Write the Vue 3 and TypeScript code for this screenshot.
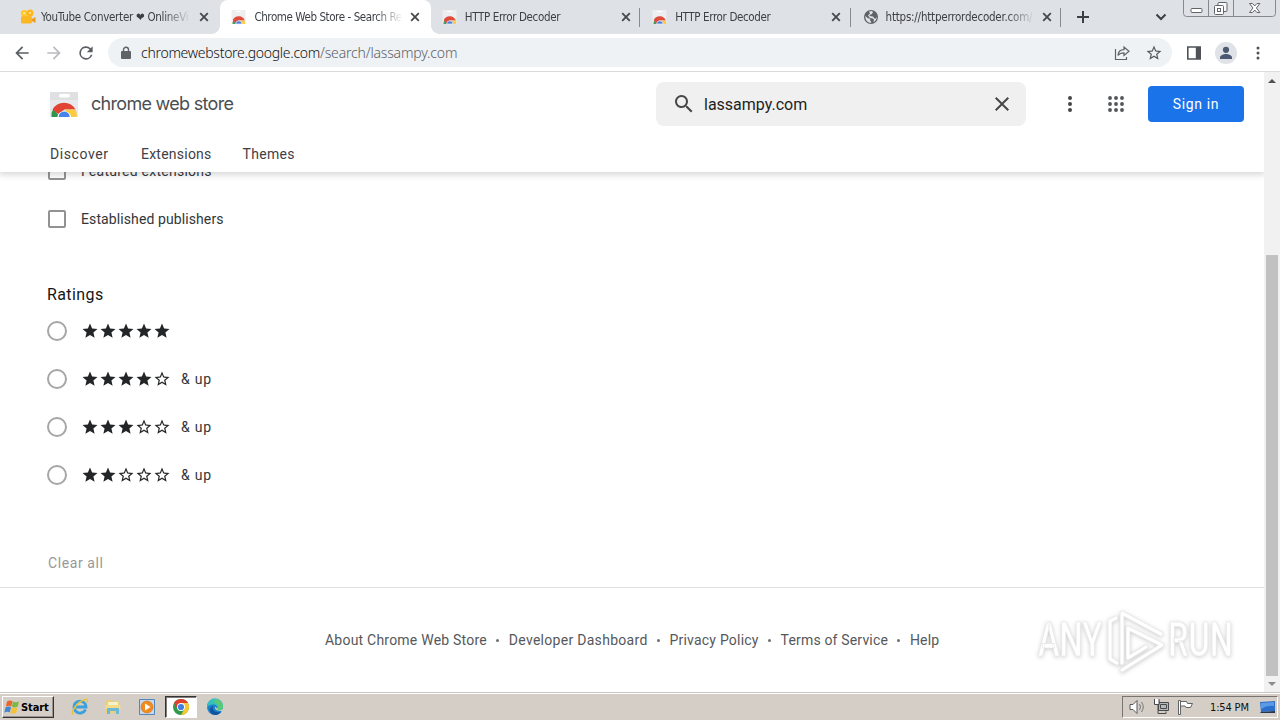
<script setup lang="ts">
interface Tab {
  title: string
  icon: 'camera' | 'store' | 'globe'
  active?: boolean
  kind: string
}

const tabs: Tab[] = [
  { title: 'YouTube Converter ❤ OnlineVi', icon: 'camera', kind: 'tab-video' },
  { title: 'Chrome Web Store - Search Re', icon: 'store', active: true, kind: 'tab-results' },
  { title: 'HTTP Error Decoder', icon: 'store', kind: 'tab-decoder' },
  { title: 'HTTP Error Decoder', icon: 'store', kind: 'tab-decoder' },
  { title: 'https://httperrordecoder.com/', icon: 'globe', kind: 'tab-address' },
]

const ratings: number[] = [5, 4, 3, 2]
const links = [
  { label: 'About Chrome Web Store', cls: 'l1' },
  { label: 'Developer Dashboard', cls: 'l2' },
  { label: 'Privacy Policy', cls: 'l3' },
  { label: 'Terms of Service', cls: 'l4' },
  { label: 'Help', cls: 'l5' },
]
const starFull = 'M12 17.27L18.18 21l-1.64-7.03L22 9.24l-7.19-.61L12 2 9.19 8.63 2 9.24l5.46 4.73L5.82 21z'
const starEmpty =
  'M22 9.24l-7.19-.62L12 2 9.19 8.63 2 9.24l5.46 4.73L5.82 21 12 17.27 18.18 21l-1.63-7.03L22 9.24zM12 15.4l-3.76 2.27 1-4.28-3.32-2.88 4.38-.38L12 6.1l1.71 4.04 4.38.38-3.32 2.88 1 4.28L12 15.4z'
const grid = [3, 9, 15]
</script>

<template>
  <div class="screen">
    <div class="tabstrip">
      <div v-for="(tab, i) in tabs" :key="i" class="tab" :class="[tab.kind, { active: tab.active, line: i > 1 }]">
        <svg v-if="tab.icon === 'camera'" class="fav" viewBox="0 0 16 16">
          <circle cx="4.2" cy="4.3" r="3.3" fill="#ffc928" /><circle cx="10" cy="4" r="3.5" fill="#ffb51f" />
          <circle cx="4.2" cy="4.3" r="1" fill="#fff0b0" /><circle cx="10" cy="4" r="1" fill="#fff0b0" />
          <rect x="1" y="7" width="11" height="7.5" rx="1.5" fill="#fbb724" /><path d="M12 10l3.5-2v6L12 12z" fill="#f09a1a" />
        </svg>
        <svg v-else-if="tab.icon === 'store'" class="fav" viewBox="0 0 16 16">
          <path d="M.5 1h14v14H.5z" fill="#eceef0" /><path d="M5 2h5v1H5z" fill="#fff" />
          <path d="M1.500 15a6.500 6.500 0 0 1 1-4l3 4z" fill="#4a9b58" /><path d="M1.800 11a6.500 6.500 0 0 1 12 .5H7.500L4.500 14.500z" fill="#df4a3b" />
          <path d="M8 11.500h5.700a6 6 0 0 1 .3 3.500H9z" fill="#fbcb4b" /><path d="M4.600 15a3.200 3.200 0 0 1 6.400 0z" fill="#4b80dc" stroke="#eef" stroke-width=".7" />
        </svg>
        <svg v-else class="fav" viewBox="0 0 16 16">
          <circle cx="8" cy="8" r="7" fill="#5f6368" />
          <path d="M2.300 7L5 9.300l2.200.4v1.800L8.600 13.800C5 14.300 2.200 11.500 2.300 7zM6 2.500l3-.5 1 1.500-1.500 1.700-1.500.5L6.500 7 10 7.500l1.500 2h1.200l1-1.500c.3 2.500-1.700 4.700-3.400 5.200l.700-2.200-1-1.500-3-.500-2-2.500 2-2z" fill="#dee1e6" />
        </svg>
        <div class="title"><span>{{ tab.title }}</span></div>
        <svg class="close" viewBox="0 0 10 10"><path d="M1.200 1.200l7.600 7.600M8.800 1.200L1.200 8.800" /></svg>
      </div>
      <svg class="plus" viewBox="0 0 14 14"><path d="M7 1v12M1 7h12" /></svg>
      <svg class="chev" viewBox="0 0 12 8"><path d="M1.500 1.500L6 6l4.500-4.500" /></svg>
      <svg class="winctl" viewBox="0 0 94 18" fill="none">
        <path d="M.5 0v13.500q0 3 3 3h86q3 0 3-3V0M25.500 0v16M50.500 0v16" stroke="#858991" />
        <rect x="8" y="8.500" width="11" height="4" rx="1" fill="#fff" stroke="#60646b" />
        <rect x="35" y="2.500" width="9" height="9" rx="1" fill="#f8f9fa" stroke="#60646b" />
        <rect x="31.500" y="5.500" width="9" height="9" rx="1" fill="#fff" stroke="#60646b" /><rect x="34.500" y="8.500" width="3" height="3" stroke="#60646b" />
        <path d="M66.500 3.500h3l2.200 2.500 2.200-2.500h3l-3.500 4.500 3.500 4.500h-3L71.700 10l-2.200 2.500h-3L70 8z" fill="#fff" stroke="#60646b" />
      </svg>
    </div>

    <div class="toolbar">
      <svg class="nav" viewBox="0 0 24 24"><path d="M20 11H7.800l5.600-5.600L12 4l-8 8 8 8 1.400-1.400L7.800 13H20z" /></svg>
      <svg class="nav off" viewBox="0 0 24 24"><path d="M12 4l-1.400 1.400L16.200 11H4v2h12.200l-5.600 5.600L12 20l8-8z" /></svg>
      <svg class="nav" viewBox="0 0 24 24"><path d="M17.650 6.350A8 8 0 1 0 19.730 14h-2.080A6 6 0 1 1 12 6c1.660 0 3.140.69 4.220 1.780L13 11h7V4z" /></svg>
      <div class="omnibox">
        <svg class="lock" viewBox="0 0 10 14"><path d="M1 5h8q1 0 1 1v6q0 1-1 1H1q-1 0-1-1V6q0-1 1-1z" fill="#5f6368" /><path d="M2.500 5.500V3.700a2.500 2.500 0 0 1 5 0v1.800" fill="none" stroke="#5f6368" stroke-width="1.400" /></svg>
        <div class="url"><span class="host">chromewebstore.google.com</span><span class="path">/search/lassampy.com</span></div>
        <svg class="share" viewBox="0 0 16 16" fill="none" stroke="#5f6368" stroke-width="1.200"><path d="M1.500 4v10.500h11V12M4 10.500c.3-4 2.500-5.800 6-5.800V2l5 4.300-5 4.200V7.800C7 7.800 5.300 8.500 4 10.500z" /></svg>
        <svg class="mark" viewBox="0 0 24 24"><path :d="starEmpty" /></svg>
      </div>
      <svg class="panel" viewBox="0 0 14 14"><path d="M.8 1h12.400v12H.8z" fill="none" stroke="#4f5358" stroke-width="1.600" /><path d="M8.800 1H13v12H8.800z" fill="#4f5358" /></svg>
      <svg class="avatar" viewBox="0 0 22 22"><circle cx="11" cy="11" r="11" fill="#dfe2e7" /><circle cx="11" cy="7.800" r="3.100" fill="#4d5872" /><path d="M5 17v-1.500c0-2.300 3.500-3.500 6-3.500s6 1.200 6 3.500V17z" fill="#4d5872" /></svg>
      <svg class="dots" viewBox="0 0 4 14"><circle cx="2" cy="2" r="1.500" /><circle cx="2" cy="7" r="1.500" /><circle cx="2" cy="12" r="1.500" /></svg>
    </div>

    <div class="viewport">
      <div class="page">
        <header>
          <div class="top">
            <svg class="logo" viewBox="0 0 28 27">
              <path d="M0 0h28v24q0 1-1 1H1q-1 0-1-1z" fill="#e8e9ea" /><path d="M0 0h28v8H0z" fill="#dfe0e2" /><rect x="9" y="2" width="11" height="3.500" rx="1.700" fill="#fff" />
              <path d="M1.500 25a12.500 12.500 0 0 1 2-8.500L10 25z" fill="#31964b" />
              <path d="M2.600 17.500A13 13 0 0 1 25.500 17.500H14.500L8.300 22z" fill="#e14435" />
              <path d="M15 17.500h10.500a13 13 0 0 1 1.300 7.500H17z" fill="#fccb42" />
              <path d="M7.300 25a7 7 0 0 1 13.800 0z" fill="#fff" /><path d="M8.700 25a5.500 5.500 0 0 1 11 0z" fill="#4484ec" />
            </svg>
            <div class="brand">chrome web store</div>
            <div class="search">
              <svg class="lens" viewBox="0 0 24 24"><path d="M15.500 14h-.79l-.28-.27A6.500 6.500 0 1 0 13.730 14.430l.27.28v.79l5 4.990L20.490 19zM9.500 14a4.500 4.500 0 1 1 0-9 4.500 4.500 0 0 1 0 9z" /></svg>
              <span class="query">lassampy.com</span>
              <svg class="clear" viewBox="0 0 24 24"><path d="M19 6.410L17.590 5 12 10.590 6.410 5 5 6.410 10.590 12 5 17.590 6.410 19 12 13.410 17.590 19 19 17.590 13.410 12z" /></svg>
            </div>
            <svg class="more" viewBox="0 0 4 18"><circle cx="2" cy="3" r="2" /><circle cx="2" cy="9" r="2" /><circle cx="2" cy="15" r="2" /></svg>
            <svg class="apps" viewBox="0 0 18 18"><template v-for="y in grid"><circle v-for="x in grid" :key="x + '-' + y" :cx="x" :cy="y" r="1.950" /></template></svg>
            <div class="signin"><span>Sign in</span></div>
          </div>
          <nav class="menu"><span class="m1">Discover</span><span class="m2">Extensions</span><span class="m3">Themes</span></nav>
        </header>

        <main>
          <label class="row"><i class="box"></i><span class="feat">Featured extensions</span></label>
          <label class="row"><i class="box"></i><span class="est">Established publishers</span></label>
          <h2>Ratings</h2>
          <div v-for="r in ratings" :key="r" class="row">
            <i class="radio"></i>
            <div class="stars"><svg v-for="n in 5" :key="n" viewBox="0 0 24 24"><path :d="n <= r ? starFull : starEmpty" /></svg></div>
            <span v-if="r < 5" class="up">&amp; up</span>
          </div>
          <div class="clearall"><span>Clear all</span></div>
        </main>

        <footer>
          <template v-for="(l, i) in links" :key="l.label"><b v-if="i > 0"></b><span :class="l.cls">{{ l.label }}</span></template>
        </footer>

        <svg class="watermark" viewBox="0 0 220 76">
          <g fill="#fff" stroke="#e6e6e6" stroke-width=".7">
            <text x="8" y="51" textLength="64" lengthAdjust="spacingAndGlyphs">ANY</text>
            <text x="138" y="51" textLength="65" lengthAdjust="spacingAndGlyphs">RUN</text>
          </g>
          <g fill="none" stroke-linejoin="round" stroke-linecap="round">
            <path d="M86 13l-6 3v38l7 4M92 58V8l39 21M92 65l40-25-34-17v30l18-11" stroke="#e6e6e6" stroke-width="4.600" />
            <path d="M86 13l-6 3v38l7 4M92 58V8l39 21M92 65l40-25-34-17v30l18-11" stroke="#fff" stroke-width="3.200" />
          </g>
        </svg>
      </div>

      <div class="scroll">
        <svg viewBox="0 0 8 4"><path d="M0 4l4-4 4 4z" fill="#505050" /></svg>
        <div class="thumb"></div>
        <svg viewBox="0 0 8 4"><path d="M0 0l4 4 4-4z" fill="#8c8c8c" /></svg>
      </div>
    </div>

    <div class="taskbar">
      <div class="start">
        <svg viewBox="0 0 16 16"><path d="M3 2.500q3-2 5.500-.3L7.300 7.500Q4.500 6 1.800 7.700z" fill="#e9662c" /><path d="M9 2.500q2.500 1.500 6 0l-1.300 5.200q-3 1.500-5.800 0z" fill="#7fb848" /><path d="M1.500 8.500q3-1.700 5.500-.2L5.700 13.500Q3 12 .3 13.800z" fill="#4486d0" /><path d="M7.700 8.500q3 1.600 5.800 0l-1.300 5.200q-3 1.700-5.800 0z" fill="#f4c233" /></svg>
        <span>Start</span>
      </div>
      <svg class="task ie" viewBox="0 0 18 18"><path d="M14.500 11.500a6 6 0 1 1 .5-2.500H5" fill="none" stroke="#3ba0dc" stroke-width="2.800" /><path d="M2 16.500C-.5 14 6 4 14 1.500c2.500-.8 3 .5 2 3" fill="none" stroke="#e9c33c" stroke-width="1.500" /></svg>
      <svg class="task folder" viewBox="0 0 18 18"><path d="M2 4l1-2h5l1 1.500h6V15H2z" fill="#e9cf76" /><path d="M4 4h10v7H4z" fill="#f7f1c9" /><path d="M1.500 7h15v4h-15z" fill="#f1dc8b" /><path d="M3 16v-5q0-1 1-1h10q1 0 1 1v5h-3v-3H6v3z" fill="#6db8d8" /></svg>
      <svg class="task media" viewBox="0 0 18 18"><path d="M1.500 1.500h15v15h-15z" fill="#c7d9ec" stroke="#5286bd" /><circle cx="9" cy="9" r="6" fill="#f18b1e" stroke="#d46c10" stroke-width=".6" /><path d="M7 5.500l5.500 3.500L7 12.500z" fill="#fff" /></svg>
      <div class="current">
        <svg viewBox="0 0 16 16"><circle cx="8" cy="8" r="8" fill="#30994b" /><path d="M1.070 4A8 8 0 0 1 14.930 4H8L4.540 10z" fill="#df4030" /><path d="M14.930 4A8 8 0 0 1 8 16l3.460-6L8 4z" fill="#fbc72f" /><circle cx="8" cy="8" r="4" fill="#fff" /><circle cx="8" cy="8" r="3.100" fill="#3f7fe6" /></svg>
      </div>
      <svg class="task edge" viewBox="0 0 18 18"><circle cx="9" cy="9" r="8" fill="#1b80cb" /><path d="M1 8A8 8 0 0 1 17 8.500c0 3-2.500 4-4.500 4s-2.500-1-1.500-2c1.500-2-1-4-4-4-3 0-5 1-6 3z" fill="#37bfc0" /><path d="M9 1a8 8 0 0 1 8 7.500c0 3-2.500 4-4.500 4s-2.500-1-1.500-2C13 8 11 5 8 5z" fill="#58c976" /><path d="M7 8c-1.500 4 2 7 8 6-3 4-8 3.500-10 1S4 9 7 8z" fill="#13539d" /><path d="M9 8.500q-1 3.500 5 4.500h3v-2q-5 3-6-.500z" fill="#d4cec6" /></svg>
      <div class="tray">
        <svg class="vol" viewBox="0 0 17 16" fill="#fff" stroke="#55585c"><path d="M1 5.500h3l4-4v13l-4-4H1z" /><path d="M10.500 5q2 3 0 6M12.500 3q3.500 5 0 10" fill="none" stroke="#777" /></svg>
        <svg class="net" viewBox="0 0 17 16" fill="#fff" stroke="#484b4e"><path d="M5.500 3.500h10v8h-10zM7.500 5.500h6v4h-6z" fill="#b7b8b8" /><path d="M1 1.500h5v4H5v9h8v-2" fill="none" /><path d="M1.500 0v5.500H6V0" /></svg>
        <svg class="flag" viewBox="0 0 16 16" fill="#fff" stroke="#606266"><path d="M1.500 15.500v-14h2v14zM3.500 2.500h6l1 2h5l-2 4H9l-1-1.500H3.500z" /></svg>
        <span>1:54 PM</span>
        <svg class="desk" viewBox="0 0 16 14"><path d="M0 2l15-1v10L1 12z" fill="#2b6fcb" /><path d="M1 3l13-1v4Q7 5 1 9z" fill="#5b9ae4" /><path d="M0 12l15-1v2H1z" fill="#27364d" /></svg>
      </div>
    </div>
  </div>
</template>

<style>
body { margin: 0; overflow: hidden; }
</style>

<style scoped>
* { box-sizing: border-box; }
svg { display: block; flex: none; overflow: visible; }
span { white-space: nowrap; }
.screen { width: 1280px; height: 720px; display: flex; flex-direction: column; background: #fff; overflow: hidden; font-family: Roboto, "Liberation Sans", sans-serif; color: #1f1f1f; }

.tabstrip { height: 34px; flex: none; background: #dee1e6; display: flex; padding-left: 10px; font-family: "DejaVu Sans Condensed", "DejaVu Sans", sans-serif; }
.tab { width: 210.400px; height: 34px; flex: none; display: flex; align-items: center; padding: 0 10px 0 11px; position: relative; }
.tab-video { padding: 0 11px 0 10px; }
.fav { width: 16px; height: 16px; margin-right: 6px; }
.title { width: 149px; flex: none; margin-right: -1px; font-size: 11.500px; line-height: 18px; color: #3c3f44; mask-image: linear-gradient(90deg, #000 122px, transparent 150px); font-stretch: condensed; padding-left: 1px; }
.tab-video .title { padding-left: 0; margin-left: -1px; margin-right: 0; }
.title span { letter-spacing: -.36px; }
.tab-video .title span { letter-spacing: -.27px; }
.tab-results .title span { letter-spacing: -.42px; }
.tab-address .title span { letter-spacing: -.22px; }
.close { width: 10px; height: 10px; margin-left: 9px; fill: none; stroke: #45484d; stroke-width: 1.800; }
.tab.active { background: #fff; border-radius: 8px 8px 0 0; }
.tab.active::before, .tab.active::after { content: ""; position: absolute; bottom: 0; width: 8px; height: 8px; }
.tab.active::before { left: -8px; background: radial-gradient(circle at 0 0, transparent 7.500px, #fff 8px); }
.tab.active::after { right: -8px; background: radial-gradient(circle at 100% 0, transparent 7.500px, #fff 8px); }
.tab.line::after { content: ""; position: absolute; right: 1px; top: 8px; width: 1px; height: 19px; background: #868a91; }
.plus { width: 14px; height: 14px; margin: 10px 0 0 14px; fill: none; stroke: #3c4043; stroke-width: 2; }
.chev { width: 12px; height: 8px; margin: 13px 0 0 65px; fill: none; stroke: #3c4043; stroke-width: 2; }
.winctl { width: 94px; height: 18px; margin-left: auto; margin-right: 3px; }

.toolbar { height: 38px; flex: none; display: flex; align-items: center; padding-left: 12px; border-bottom: 1px solid #d9dbdd; }
.nav { width: 20px; height: 20px; margin-right: 12px; fill: #5a5e63; }
.nav.off { fill: #b9bbbe; }
.omnibox { width: 1064px; height: 29px; background: #eff2f5; border-radius: 15px; display: flex; align-items: center; padding-left: 13px; }
.lock { width: 10px; height: 14px; }
.url { width: 965px; margin-left: 10px; font-family: "Noto Sans", sans-serif; font-size: 14px; font-weight: 300; line-height: 20px; color: #101113; display: flex; }
.url span { letter-spacing: -.28px; }
.url .path { color: #5c6065; letter-spacing: -.17px; }
.share { width: 16px; height: 16px; margin-left: 8px; }
.mark { width: 18px; height: 18px; margin-left: 15px; fill: #55595e; }
.panel { width: 14px; height: 14px; margin-left: 15px; }
.avatar { width: 22px; height: 22px; margin-left: 14px; }
.dots { width: 4px; height: 14px; margin-left: 19px; fill: #4d5156; }

.viewport { height: 620px; flex: none; display: flex; }
.page { width: 1264px; height: 620px; display: flex; flex-direction: column; position: relative; overflow: hidden; }
header { height: 100px; flex: none; background: #fff; position: relative; z-index: 2; box-shadow: 0 2px 6px 1px rgba(60, 64, 67, .2); }
.top { height: 64px; display: flex; align-items: center; padding-left: 50px; }
.logo { width: 28px; height: 27px; margin-top: 2px; }
.brand { width: 565px; margin: -1px 0 0 13px; font-family: Inter, Roboto, sans-serif; font-size: 18px; color: #4b4e51; letter-spacing: -.7px; white-space: nowrap; }
.search { width: 370px; height: 44px; border-radius: 8px; background: #f0f0f0; display: flex; align-items: center; padding-left: 16px; }
.lens { width: 24px; height: 24px; fill: #474747; }
.query { width: 286px; margin-left: 8px; font-size: 16px; color: #1f1f1f; }
.clear { width: 24px; height: 24px; fill: #474747; }
.more { width: 4px; height: 18px; margin-left: 42px; fill: #444746; }
.apps { width: 18px; height: 18px; margin-left: 35px; fill: #55585b; }
.signin { width: 96px; height: 36px; margin-left: 23px; border-radius: 4px; background: #1a73e8; color: #fff; display: flex; align-items: center; justify-content: center; font-size: 14px; }
.signin span { letter-spacing: .65px; }
.menu { height: 36px; display: flex; align-items: center; padding: 0 0 0 50px; font-size: 14px; color: #3f4144; }
.menu span { letter-spacing: .6px; }
.menu .m1 { width: 91px; }
.menu .m2 { width: 101.500px; letter-spacing: .23px; }
.menu .m3 { letter-spacing: .33px; }

main { height: 440px; flex: none; margin-top: -25px; display: flex; flex-direction: column; }
.row { height: 48px; flex: none; display: flex; align-items: center; padding-left: 47px; font-size: 14px; color: #333537; }
.box { width: 18px; height: 18px; border: 2px solid #929292; border-radius: 2px; margin: 0 15px 0 1px; }
.feat { letter-spacing: .25px; }
.est { letter-spacing: .1px; }
h2 { margin: 40px 0 0 47px; height: 24px; font-size: 16px; line-height: 24px; font-weight: 400; letter-spacing: .4px; color: #161616; }
.radio { width: 20px; height: 20px; border: 2px solid #a6a6a6; border-radius: 50%; }
.stars { display: flex; margin-left: 14px; fill: #242526; }
.stars svg { width: 18px; height: 18px; }
.up { margin-left: 10px; letter-spacing: .75px; }
.clearall { margin: 52px 0 0 48px; height: 24px; line-height: 24px; font-size: 14px; color: #989898; }
.clearall span { letter-spacing: .6px; }

footer { height: 105px; flex: none; border-top: 1px solid #dfe0e1; display: flex; align-items: center; padding-left: 325px; font-size: 14px; color: #55585b; }
footer span { letter-spacing: .22px; }
footer .l2 { letter-spacing: .29px; }
footer .l4 { letter-spacing: .17px; }
footer b { width: 3px; height: 3px; border-radius: 50%; background: #6c6e70; margin: 0 9.450px; }
.watermark { position: absolute; left: 1030px; top: 533px; width: 220px; height: 76px; filter: drop-shadow(0 1px 2px rgba(0, 0, 0, .2)); font: 500 49px Roboto, sans-serif; }
.scroll { width: 16px; height: 620px; background: #f1f1f1; display: flex; flex-direction: column; align-items: center; padding: 7px 0 5px; }
.scroll svg { width: 8px; height: 4px; }
.thumb { width: 12px; height: 421px; margin: 172px 0 6px; background: #c1c1c1; }

.taskbar { height: 28px; flex: none; display: flex; align-items: center; border-top: 1px solid #c9c6c2; box-shadow: inset 0 1px #fff; background: #d5cec6; padding: 1px 2px 0; font-family: "DejaVu Sans Condensed", "DejaVu Sans", sans-serif; font-size: 11px; color: #111; }
.start { width: 52px; height: 22px; display: flex; align-items: center; border: 1px solid; border-color: #fff #333 #333 #fff; box-shadow: inset -1px -1px #99948e; font-weight: 700; padding-left: 1px; }
.start svg { width: 16px; height: 16px; margin-right: 1px; }
.start span { letter-spacing: -.1px; color: #000; }
.task { width: 18px; height: 18px; margin-left: 16px; }
.task.ie { margin-left: 17px; }
.task.folder { margin-left: 15px; }
.current { width: 32px; height: 22px; margin-left: 9px; background: #fff; border: 1px solid; border-color: #333 #fff #fff #333; box-shadow: inset 1px 1px #807d79; display: flex; align-items: center; justify-content: center; }
.current svg { width: 16px; height: 16px; }
.task.edge { margin-left: 9px; }
.tray { width: 156px; height: 22px; margin-left: auto; border: 1px solid; border-color: #77746f #fff #fff #77746f; display: flex; align-items: center; padding-left: 6px; }
.vol { width: 17px; height: 16px; }
.net { width: 17px; height: 16px; margin-left: 7px; }
.flag { width: 16px; height: 16px; margin-left: 7px; }
.tray span { width: 43px; margin-left: 17px; letter-spacing: -.15px; }
.desk { width: 16px; height: 14px; margin-left: 7px; }
</style>
